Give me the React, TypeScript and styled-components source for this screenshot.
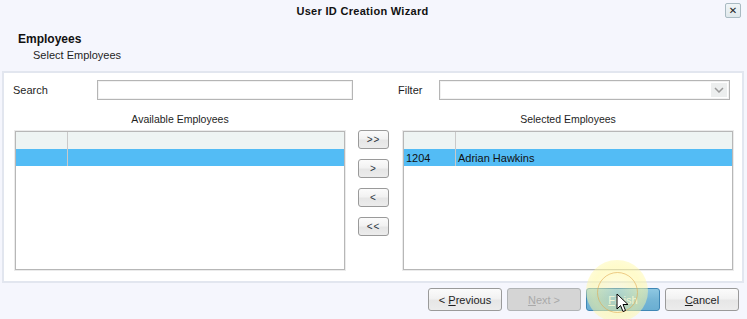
import React from "react";
import styled, { createGlobalStyle, css } from "styled-components";

const GlobalStyle = createGlobalStyle`
  html, body {
    margin: 0;
    padding: 0;
    background: #f5f6fd;
  }
  body {
    font-family: "Liberation Sans", Arial, sans-serif;
    font-size: 11px;
    color: #1e1e1e;
  }
`;

const Wizard = styled.div`
  width: 747px;
  height: 319px;
  display: flex;
  flex-direction: column;
  background: #f5f6fd;
  overflow: hidden;
`;

const TitleBar = styled.div`
  height: 21px;
  display: flex;
  align-items: center;
  padding: 0 6px 0 0;
`;

const Title = styled.div`
  flex: 1;
  text-align: center;
  font-weight: bold;
  font-size: 11px;
  letter-spacing: 0.3px;
  color: #111;
`;

const CloseButton = styled.button`
  width: 16px;
  height: 15px;
  padding: 0;
  border: 1px solid #a9bac2;
  border-radius: 2px;
  background: linear-gradient(#f0f5f7, #dfe8ec);
  display: flex;
  align-items: center;
  justify-content: center;
  color: #222;
  font-family: "DejaVu Sans", sans-serif;
  font-size: 10px;
  line-height: 1;
`;

const Header = styled.div`
  margin-top: 11px;
  padding-left: 18px;
`;

const Heading = styled.div`
  font-weight: bold;
  font-size: 12px;
  line-height: 14px;
  color: #111;
`;

const SubHeading = styled.div`
  margin-top: 2px;
  padding-left: 15px;
  line-height: 14px;
`;

const Panel = styled.section`
  margin: 9px 3px 0 2px;
  height: 212px;
  box-sizing: border-box;
  border: 2px solid #e2e6ef;
  background: #fff;
  padding: 7px 0 0 9px;
`;

const FieldsRow = styled.div`
  display: flex;
  align-items: center;
  height: 20px;
`;

const FieldLabel = styled.label<{ $width: number }>`
  width: ${(p) => p.$width}px;
  flex: none;
`;

const TextBox = styled.div<{ $width: number }>`
  width: ${(p) => p.$width}px;
  height: 20px;
  box-sizing: border-box;
  border: 1px solid #b5b5b5;
  box-shadow: inset 0 0 0 1px #f2f2f2;
  background: #fff;
  flex: none;
  position: relative;
`;

const SelectArrow = styled.span`
  position: absolute;
  right: 2px;
  top: 2px;
  width: 16px;
  height: 14px;
  background: #eceeee;
  display: flex;
  align-items: center;
  justify-content: center;
`;

const FieldGap = styled.div<{ $width: number }>`
  width: ${(p) => p.$width}px;
  flex: none;
`;

const ListsRow = styled.div`
  display: flex;
  margin-top: 12px;
  padding-left: 2px;
`;

const ListColumn = styled.div`
  width: 330px;
  display: flex;
  flex-direction: column;
`;

const Caption = styled.div`
  text-align: center;
  line-height: 14px;
  font-size: 10.5px;
  margin-bottom: 5px;
`;

const ListBox = styled.div`
  height: 139px;
  box-sizing: border-box;
  border: 1px solid #b7b7b7;
  box-shadow: 0 0 0 1px #ebebeb;
  background: #fff;
`;

const Row = styled.div<{ $kind: "header" | "selected" }>`
  display: flex;
  height: 17px;
  align-items: center;
  ${(p) =>
    p.$kind === "header"
      ? css`
          background: #eef4f3;
        `
      : css`
          background: #53bcf5;
          color: #111;
        `}
`;

const Cell = styled.div<{ $first?: boolean }>`
  height: 100%;
  display: flex;
  align-items: center;
  box-sizing: border-box;
  padding-left: 2px;
  ${(p) =>
    p.$first
      ? css`
          width: 52px;
          border-right: 1px solid #c9c9c9;
        `
      : css`
          flex: 1;
        `}
`;

const MoveButtons = styled.div`
  width: 31px;
  margin: 18px 14px 0 13px;
  display: flex;
  flex-direction: column;
  gap: 10px;
`;

const buttonBase = css`
  box-sizing: border-box;
  border: 1px solid #9a9a9a;
  border-radius: 3px;
  background: linear-gradient(#fbfbfb 0%, #f2f2f2 45%, #e6e6e6 55%, #ececec 100%);
  font-family: "Liberation Sans", Arial, sans-serif;
  font-size: 11px;
  color: #1e1e1e;
  padding: 0;
  display: flex;
  align-items: center;
  justify-content: center;
`;

const MoveButton = styled.button`
  ${buttonBase};
  height: 19px;
  width: 31px;
  color: #2a3440;
  font-size: 10px;
  letter-spacing: 1px;
`;

const Footer = styled.div`
  display: flex;
  justify-content: flex-end;
  gap: 5px;
  padding: 5px 8px 0 0;
`;

const NavButton = styled.button<{ $state?: "disabled" | "hover" }>`
  ${buttonBase};
  width: 74px;
  height: 23px;
  ${(p) =>
    p.$state === "disabled" &&
    css`
      background: #d5d5d5;
      border-color: #b0b3b5;
      color: #a9a9a9;
    `}
  ${(p) =>
    p.$state === "hover" &&
    css`
      background: linear-gradient(#8fc8e2, #76b6d6 50%, #6aaed2);
      border-color: #3f87b5;
      color: #e8f4fa;
    `}
  u {
    text-decoration: underline;
  }
`;

const HoverSpot = styled.div`
  position: relative;
`;

const Halo = styled.span`
  position: absolute;
  left: 0;
  top: -28px;
  width: 62px;
  height: 62px;
  border-radius: 50%;
  background: radial-gradient(
    circle,
    rgba(255, 250, 170, 0.3) 0%,
    rgba(255, 248, 160, 0.55) 55%,
    rgba(255, 250, 190, 0.35) 100%
  );
  pointer-events: none;
`;

const Ring = styled.span`
  position: absolute;
  left: 11px;
  top: -16px;
  width: 39px;
  height: 39px;
  border-radius: 50%;
  border: 1px solid rgba(225, 170, 80, 0.6);
  pointer-events: none;
`;

const Cursor = styled.svg`
  position: absolute;
  left: 30px;
  top: 5px;
  pointer-events: none;
`;

export default function App() {
  return (
    <Wizard>
      <GlobalStyle />
      <TitleBar>
        <Title>User ID Creation Wizard</Title>
        <CloseButton>✕</CloseButton>
      </TitleBar>

      <Header>
        <Heading>Employees</Heading>
        <SubHeading>Select Employees</SubHeading>
      </Header>

      <Panel>
        <FieldsRow>
          <FieldLabel $width={84}>Search</FieldLabel>
          <TextBox $width={256} />
          <FieldGap $width={45} />
          <FieldLabel $width={41}>Filter</FieldLabel>
          <TextBox $width={291}>
            <SelectArrow>
              <svg width="10" height="6" viewBox="0 0 10 6">
                <path d="M1 1 L5 5 L9 1" fill="none" stroke="#9a9a9a" strokeWidth="1.5" />
              </svg>
            </SelectArrow>
          </TextBox>
        </FieldsRow>

        <ListsRow>
          <ListColumn>
            <Caption>Available Employees</Caption>
            <ListBox>
              <Row $kind="header">
                <Cell $first />
                <Cell />
              </Row>
              <Row $kind="selected">
                <Cell $first />
                <Cell />
              </Row>
            </ListBox>
          </ListColumn>

          <MoveButtons>
            <MoveButton>&gt;&gt;</MoveButton>
            <MoveButton>&gt;</MoveButton>
            <MoveButton>&lt;</MoveButton>
            <MoveButton>&lt;&lt;</MoveButton>
          </MoveButtons>

          <ListColumn>
            <Caption>Selected Employees</Caption>
            <ListBox>
              <Row $kind="header">
                <Cell $first />
                <Cell />
              </Row>
              <Row $kind="selected">
                <Cell $first>1204</Cell>
                <Cell>Adrian Hawkins</Cell>
              </Row>
            </ListBox>
          </ListColumn>
        </ListsRow>
      </Panel>

      <Footer>
        <NavButton>
          &lt;&nbsp;<u>P</u>revious
        </NavButton>
        <NavButton $state="disabled">
          <u>N</u>ext &gt;
        </NavButton>
        <HoverSpot>
          <NavButton $state="hover">
            <u>F</u>inish
          </NavButton>
          <Halo />
          <Ring />
          <Cursor width="13" height="20" viewBox="0 0 13 20">
            <path
              d="M1 1 L1 16 L4.5 12.5 L7 18.5 L9.5 17.5 L7 11.5 L12 11.5 Z"
              fill="#fff"
              stroke="#000"
              strokeWidth="1"
              strokeLinejoin="round"
            />
          </Cursor>
        </HoverSpot>
        <NavButton>
          <u>C</u>ancel
        </NavButton>
      </Footer>
    </Wizard>
  );
}
